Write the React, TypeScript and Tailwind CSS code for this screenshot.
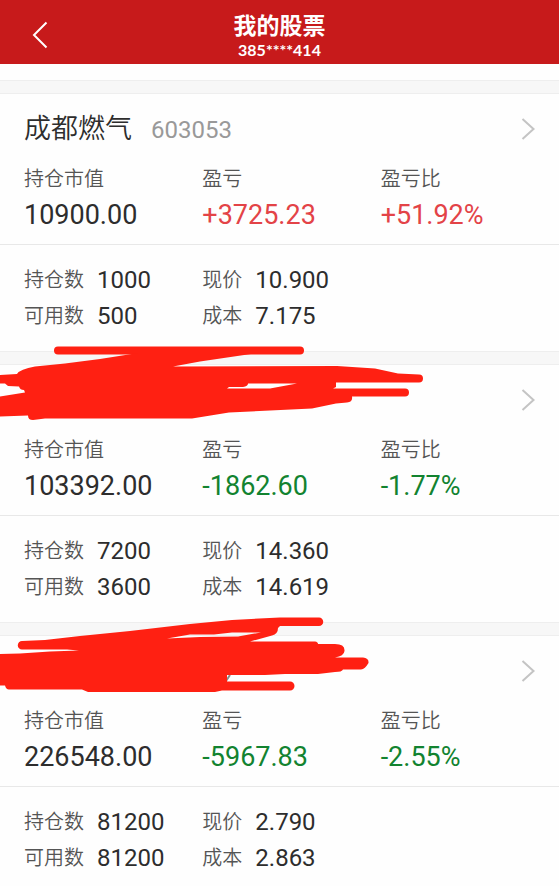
import React from "react";

type Holding = {
  id: string;
  name?: string;
  code?: string;
  marketValue: string;
  profit: string;
  ratio: string;
  quantity: string;
  available: string;
  price: string;
  cost: string;
  scribble?: React.ReactNode;
};

const firstScribble = (
  <svg
    className="pointer-events-none absolute -top-6 left-0 z-10"
    width="440"
    height="88"
    viewBox="0 341 440 88"
    fill="#ff2012"
    aria-hidden="true"
  >
    <path d="M58 350.5H300" stroke="#ff2012" strokeWidth="8" strokeLinecap="round" />
    <path
      fillRule="evenodd"
      d="M0 375L17 374Q20 369 35 366.500L65 363.500L100 359L138 353H258L217 359L200 361.500L173 366.500L337 366L375 368.500L398 373.500L419 374.500A4 4 0 0 1 419 382.500H336V387L333 388.500H405A4 4 0 0 1 405 396.500H352Q353 402 347 402.500L336 403.500L312 408.500L270 410.500L229 412.500L192 418.500H45L33 420Q28 420 28 415.500L0 416.500V396.500L25 392.500L24 390Q20 390 19 386.500L8 386L5 383.500H0ZM248 383.500H297L270 388.500H227L229 387H243Q248 386 248 383.500Z"
    />
  </svg>
);

const secondScribble = (
  <svg
    className="pointer-events-none absolute -top-6 left-0 z-10"
    width="440"
    height="88"
    viewBox="0 612 440 88"
    fill="#ff2012"
    aria-hidden="true"
  >
    <path d="M226 681L230 675" stroke="#888" strokeWidth="2" />
    <path
      fillRule="evenodd"
      d="M22 641L45 640L80 636L130 631L190 624L232 620L280 617.500H319A4.200 4.200 0 0 1 319 626H280L278 628Q278 634 272 635.500L250 641.500L315 641.500Q318 642 318 644H335Q345 644 344.500 651Q344 656 335 657.500H363Q369 658 368.500 663Q365 669 361 669.500H343Q342 672 335 672L318 674H285L265 675H227V681.500H290A4.500 4.500 0 0 1 290 690.500H222L215 692H88L82 689.500H9Q6 689.500 5 685.500H0V654L20 653.500L50 651.500L79 650.500L67 649.500H22A4.200 4.200 0 0 1 22 641ZM167 638.500L190 634.500H214L232 632.500H261L238 636.500L200 637Z"
    />
  </svg>
);

const holdings: Holding[] = [
  {
    id: "1",
    name: "成都燃气",
    code: "603053",
    marketValue: "10900.00",
    profit: "+3725.23",
    ratio: "+51.92%",
    quantity: "1000",
    available: "500",
    price: "10.900",
    cost: "7.175",
  },
  {
    id: "2",
    marketValue: "103392.00",
    profit: "-1862.60",
    ratio: "-1.77%",
    quantity: "7200",
    available: "3600",
    price: "14.360",
    cost: "14.619",
    scribble: firstScribble,
  },
  {
    id: "3",
    marketValue: "226548.00",
    profit: "-5967.83",
    ratio: "-2.55%",
    quantity: "81200",
    available: "81200",
    price: "2.790",
    cost: "2.863",
    scribble: secondScribble,
  },
];

function Metric({ label, value, tone = "text-[#2d2d2d]" }: { label: string; value: string; tone?: string }) {
  return (
    <div>
      <dt className="text-[20px] font-[350] leading-8 text-[#555]">{label}</dt>
      <dd className={`text-[27px] leading-10 ${tone}`}>{value}</dd>
    </div>
  );
}

function Detail({ label, value }: { label: string; value: string }) {
  return (
    <div className="flex items-center gap-[13px] leading-9">
      <dt className="text-[20px] font-[350] text-[#555]">{label}</dt>
      <dd className="text-[24px] text-[#2d2d2d]">{value}</dd>
    </div>
  );
}

function HoldingCard({ holding }: { holding: Holding }) {
  const tone = holding.profit.startsWith("+") ? "text-[#e34347]" : "text-[#128330]";

  return (
    <article className="relative">
      <div className="h-3.5 border-y border-[#eeeeee] bg-[#f7f7f7]" />
      <div className="relative">
        {holding.scribble}
        <div className="flex h-[69px] items-center justify-between pl-6 pr-6">
          <h2 className="flex items-center gap-[19px] pt-0.5">
            <span className="text-[27px] font-[350] text-[#2d2d2d]">{holding.name}</span>
            <span className="text-[24px] text-[#999]">{holding.code}</span>
          </h2>
          <button type="button" aria-label="查看详情">
            <svg width="14" height="24" viewBox="0 0 14 24" fill="none" stroke="#c4c4c4" strokeWidth="2">
              <path d="M1.500 2L12.500 12L1.500 22" />
            </svg>
          </button>
        </div>
        <dl className="grid grid-cols-3 pb-[9px] pl-6">
          <Metric label="持仓市值" value={holding.marketValue} />
          <Metric label="盈亏" value={holding.profit} tone={tone} />
          <Metric label="盈亏比" value={holding.ratio} tone={tone} />
        </dl>
        <dl className="grid grid-cols-3 border-t border-[#e8e8e8] py-[17px] pl-6">
          <Detail label="持仓数" value={holding.quantity} />
          <Detail label="现价" value={holding.price} />
          <div />
          <Detail label="可用数" value={holding.available} />
          <Detail label="成本" value={holding.cost} />
        </dl>
      </div>
    </article>
  );
}

export default function App() {
  return (
    <div className="min-h-screen bg-[#fefefe] font-['Roboto','Noto_Sans_CJK_SC',sans-serif]">
      <header className="grid grid-cols-[80px_1fr_80px] items-center bg-[#c71a1b] text-white">
        <button type="button" aria-label="返回" className="justify-self-center pt-1.5">
          <svg width="16" height="28" viewBox="0 0 16 28" fill="none" stroke="currentColor" strokeWidth="2">
            <path d="M14.500 1.500L2 14L14.500 26.500" />
          </svg>
        </button>
        <div className="pb-1 pt-3.5 text-center font-bold">
          <h1 className="text-[23px] leading-[26px]">我的股票</h1>
          <p className="font-['Lato',sans-serif] text-[16px] leading-5">385****414</p>
        </div>
      </header>
      <main className="pt-4">
        {holdings.map((holding) => (
          <HoldingCard key={holding.id} holding={holding} />
        ))}
      </main>
    </div>
  );
}
